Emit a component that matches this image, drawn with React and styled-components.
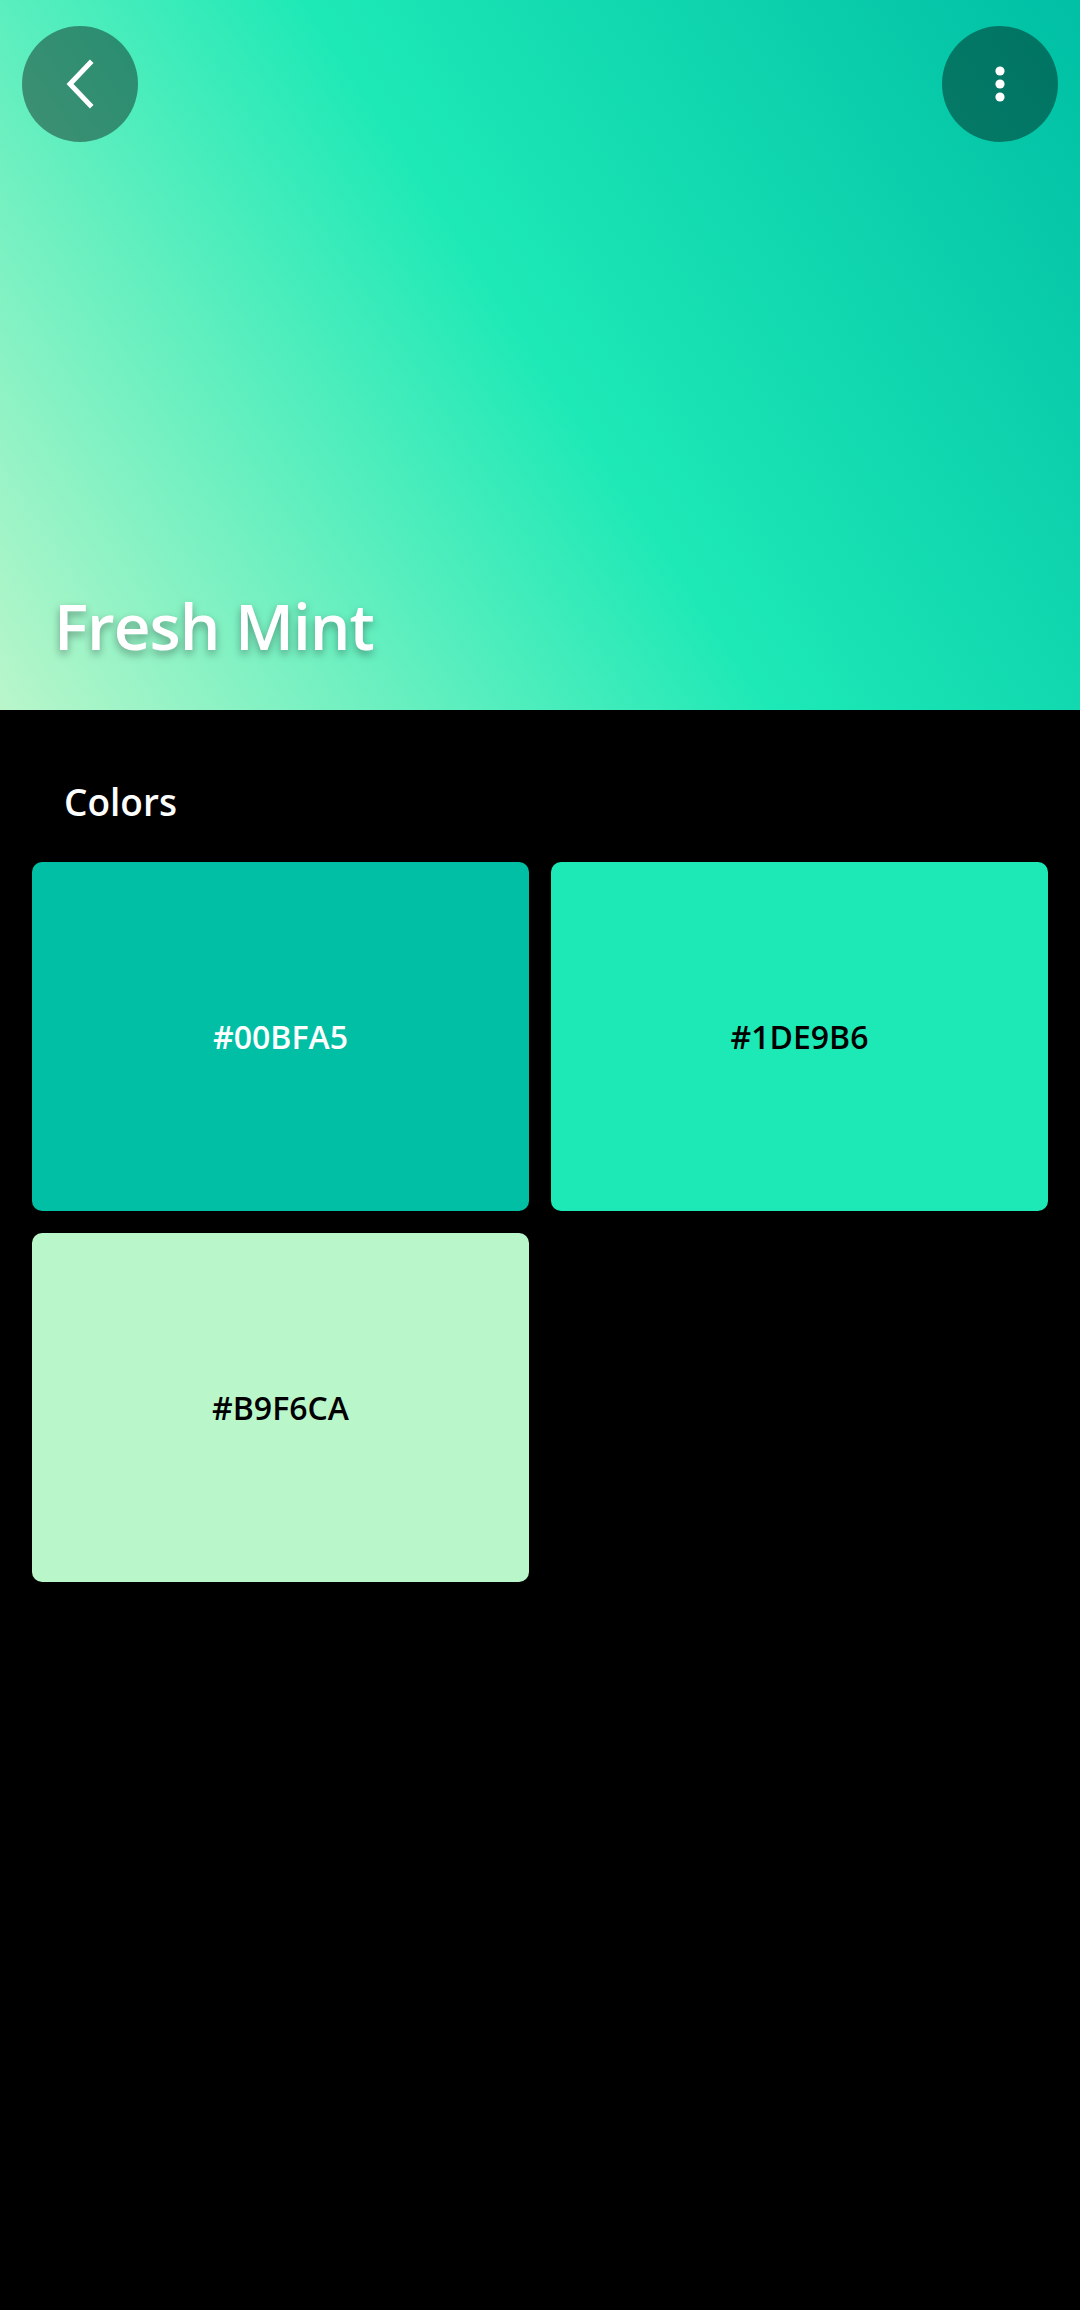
import React from 'react'
import styled, { createGlobalStyle } from 'styled-components'

const palette = {
    name: 'Fresh Mint',
    colors: [
        { hex: '#00BFA5', text: '#ffffff' },
        { hex: '#1DE9B6', text: '#000000' },
        { hex: '#B9F6CA', text: '#000000' },
    ],
};

function App() {
  return (
    <>
      <GlobalStyle />
      <Page>
        <Header>
            <TopBar>
                <RoundButton aria-label="back">
                    <svg width="40" height="52" viewBox="0 0 40 52" fill="none">
                        <path d="M30 5 L10 26 L30 47" stroke="#fff" strokeWidth="5" strokeLinecap="square" />
                    </svg>
                </RoundButton>
                <RoundButton aria-label="more">
                    <svg width="12" height="40" viewBox="0 0 12 40" fill="#fff">
                        <circle cx="6" cy="7" r="4.6" />
                        <circle cx="6" cy="20" r="4.6" />
                        <circle cx="6" cy="33" r="4.6" />
                    </svg>
                </RoundButton>
            </TopBar>
            <Title>{palette.name}</Title>
        </Header>

        <Section>
            <SectionTitle>Colors</SectionTitle>
            <SwatchGrid>
                {palette.colors.map((c) => (
                    <Swatch key={c.hex} $bg={c.hex} $fg={c.text}>
                        {c.hex}
                    </Swatch>
                ))}
            </SwatchGrid>
        </Section>
      </Page>
    </>
  )
}

const GlobalStyle = createGlobalStyle`
    html, body{
        margin: 0;
        padding: 0;
        background: #000;
    }
    body{
        font-family: "Open Sans", "Noto Sans", sans-serif;
    }
`;

const Page = styled.div`
    width: 1080px;
    min-height: 2310px;
    background-color: #000;
    display: flex;
    flex-direction: column;
`;

// gradient runs along the bottom-left -> top-right diagonal
const Header = styled.div`
    height: 710px;
    box-sizing: border-box;
    display: flex;
    flex-direction: column;
    padding: 26px 22px 52px;
    background: linear-gradient(56.7deg, #b9f6ca 0%, #1de9b6 50%, #00bfa5 100%);
`;

const TopBar = styled.div`
    display: flex;
    justify-content: space-between;
    align-items: center;
`;

const RoundButton = styled.button`
    width: 116px;
    height: 116px;
    border-radius: 50%;
    border: none;
    padding: 0;
    background-color: rgba(0, 0, 0, 0.4);
    display: flex;
    align-items: center;
    justify-content: center;
    cursor: pointer;
`;

const Title = styled.h1`
    margin: auto 0 0 32px;
    color: #fff;
    font-size: 64px;
    font-weight: 600;
    letter-spacing: -1px;
    line-height: 1;
    text-shadow: 0 4px 8px rgba(0, 0, 0, 0.35);
`;

const Section = styled.div`
    padding: 70px 32px 0;
`;

const SectionTitle = styled.h2`
    margin: 0 0 38px 32px;
    color: #fff;
    font-size: 37px;
    font-weight: 600;
    line-height: 1.2;
`;

const SwatchGrid = styled.div`
    display: grid;
    grid-template-columns: 1fr 1fr;
    gap: 22px;
`;

const Swatch = styled.div`
    height: 349px;
    border-radius: 10px;
    background-color: ${(p) => p.$bg};
    color: ${(p) => p.$fg};
    display: flex;
    align-items: center;
    justify-content: center;
    font-size: 32px;
    font-weight: 600;
`;

export default App
